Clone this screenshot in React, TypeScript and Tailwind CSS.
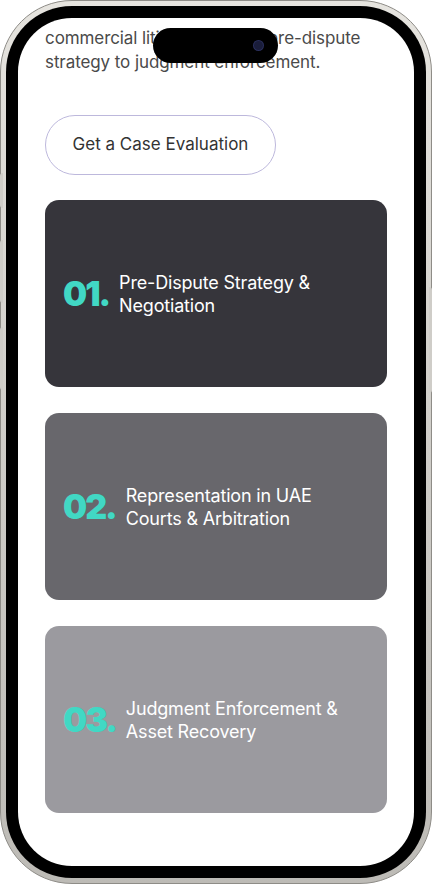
const services = [
  { no: '01.', title: ['Pre-Dispute Strategy &', 'Negotiation'], bg: 'bg-[#36353b]' },
  { no: '02.', title: ['Representation in UAE', 'Courts & Arbitration'], bg: 'bg-[#68676c]' },
  { no: '03.', title: ['Judgment Enforcement &', 'Asset Recovery'], bg: 'bg-[#9b9a9f]' },
];

function ServiceCard({ no, title, bg }: { no: string; title: string[]; bg: string }) {
  return (
    <div className={`flex h-[187px] items-center gap-[10px] rounded-[14px] pl-[18px] ${bg}`}>
      <span className="text-[34px] font-black leading-none tracking-[-0.06em] text-[#41d8c4]">{no}</span>
      <p className="text-[18px] leading-[23px] tracking-[-0.01em] text-white">
        {title[0]}
        <br />
        {title[1]}
      </p>
    </div>
  );
}

export default function App() {
  return (
    <div className="relative h-[886px] w-[432px] overflow-hidden bg-white font-['Inter',sans-serif]">
      {/* side buttons */}
      <div className="absolute left-0 top-[173px] h-[35px] w-[3px] rounded-l bg-[#cfcdc8]" />
      <div className="absolute left-0 top-[240px] h-[63px] w-[3px] rounded-l bg-[#cfcdc8]" />
      <div className="absolute left-0 top-[327px] h-[63px] w-[3px] rounded-l bg-[#cfcdc8]" />
      <div className="absolute right-0 top-[287px] h-[106px] w-[3px] rounded-r bg-[#cfcdc8]" />

      {/* device frame */}
      <div className="h-[884px] w-full rounded-[72px] border border-[#8e8c87] bg-gradient-to-b from-[#e6e4df] via-[#cfcdc8] to-[#bdbbb6] p-[5px]">
        <div className="h-full w-full rounded-[66px] bg-black p-[12px]">
          <div className="relative h-full w-full overflow-hidden rounded-[54px] bg-white">
            {/* dynamic island */}
            <div className="absolute left-[135px] top-[10px] z-10 flex h-[35px] w-[125px] items-center justify-end rounded-full bg-black pr-[15px]">
              <div className="h-[9px] w-[9px] rounded-full bg-[#1a1d3a] ring-1 ring-[#2a2f5c]" />
            </div>

            <div className="px-[27px] pt-[8px]">
              <p className="text-[17px] leading-[24px] tracking-[-0.005em] text-[#4a4a4a]">
                commercial litigation—from pre-dispute
                <br />
                strategy to judgment enforcement.
              </p>

              <button className="mt-[41px] flex h-[60px] w-[231px] items-center justify-center rounded-full border border-[#bdb8dc] text-[17px] text-[#333]">
                Get a Case Evaluation
              </button>

              <div className="mt-[25px] flex flex-col gap-[26px]">
                {services.map((s) => (
                  <ServiceCard key={s.no} {...s} />
                ))}
              </div>
            </div>
          </div>
        </div>
      </div>
    </div>
  );
}
